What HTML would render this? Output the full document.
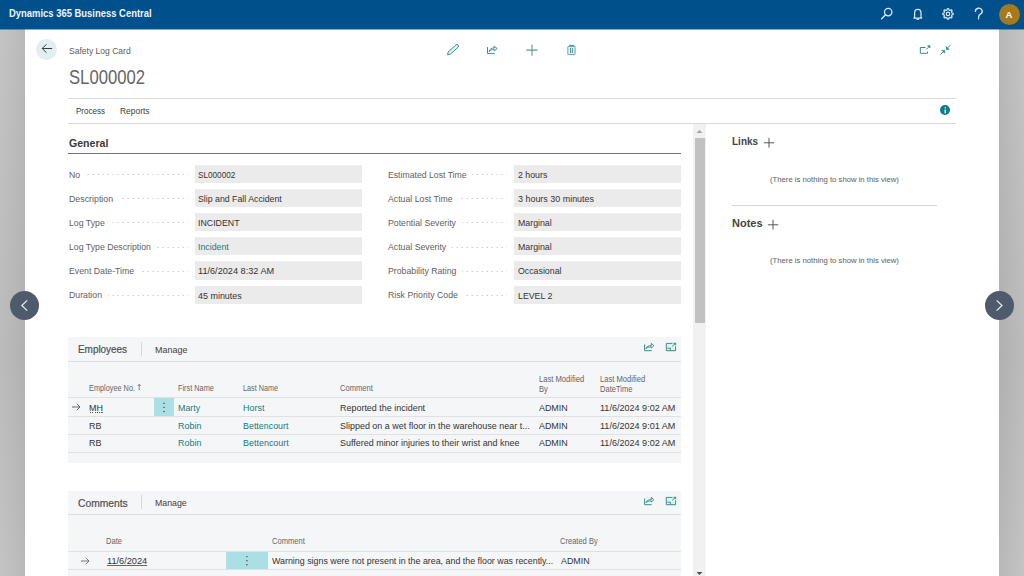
<!DOCTYPE html>
<html><head><meta charset="utf-8"><title>Safety Log Card</title><style>
html,body{margin:0;padding:0;width:1024px;height:576px;overflow:hidden;background:#fff;}
body{position:relative;font-family:"Liberation Sans", sans-serif;}
.t{position:absolute;white-space:nowrap;font-family:"Liberation Sans", sans-serif;}
.r{position:absolute;display:block;}
.dots{position:absolute;height:1px;background-image:linear-gradient(90deg,transparent 4px,#b4b4b4 4px);background-size:5px 1px;background-position:right top;z-index:1;}
</style></head><body>
<div class="r" style="left:0px;top:0px;width:1024px;height:576px;background:#ffffff;"></div>
<div class="r" style="left:0px;top:29px;width:25px;height:547px;background:linear-gradient(180deg,rgba(0,0,0,0) 0%,rgba(0,0,0,0.045) 60%,rgba(0,0,0,0) 100%),linear-gradient(90deg,#c4c4c4,#b9b9b9);"></div>
<div class="r" style="left:999px;top:29px;width:25px;height:547px;background:linear-gradient(180deg,rgba(0,0,0,0) 0%,rgba(0,0,0,0.045) 60%,rgba(0,0,0,0) 100%),linear-gradient(90deg,#b8b8b8,#c4c4c4);"></div>
<div class="r" style="left:0px;top:0px;width:1024px;height:29px;background:#00508c;"></div>
<div class="r" style="left:0px;top:29px;width:1024px;height:1px;background:rgba(0,70,125,0.45);"></div>
<div class="t" style="left:9.00px;top:8.54px;font-size:10px;line-height:10px;color:#eef5fc;font-weight:bold;transform:scaleX(0.9432);transform-origin:0 0;">Dynamics 365 Business Central</div>
<svg class="r" style="left:878px;top:6px;" width="18" height="16" viewBox="0 0 18 16"><circle cx="10.2" cy="6.1" r="3.7" fill="none" stroke="#d6e8fa" stroke-width="1.3"/><line x1="7.5" y1="8.8" x2="3.6" y2="12.7" stroke="#d6e8fa" stroke-width="1.4" stroke-linecap="round"/></svg>
<svg class="r" style="left:910px;top:6px;" width="16" height="16" viewBox="0 0 16 16"><path d="M4.6 11.4 V7.0 A3.2 3.6 0 0 1 11.0 7.0 V11.4 L11.7 12.0 H3.9 Z" fill="none" stroke="#d6e8fa" stroke-width="1.25" stroke-linejoin="round"/><path d="M6.6 12.7 A1.3 1.1 0 0 0 9.0 12.7" fill="none" stroke="#d6e8fa" stroke-width="1.2"/></svg>
<svg class="r" style="left:940px;top:6px;" width="16" height="16" viewBox="0 0 16 16"><polygon points="13.20,7.90 13.16,8.58 11.86,8.94 11.70,9.43 11.46,9.90 12.13,11.07 11.68,11.58 11.17,12.03 10.00,11.36 9.53,11.60 9.04,11.76 8.68,13.06 8.00,13.10 7.32,13.06 6.96,11.76 6.47,11.60 6.00,11.36 4.83,12.03 4.32,11.58 3.87,11.07 4.54,9.90 4.30,9.43 4.14,8.94 2.84,8.58 2.80,7.90 2.84,7.22 4.14,6.86 4.30,6.37 4.54,5.90 3.87,4.73 4.32,4.22 4.83,3.77 6.00,4.44 6.47,4.20 6.96,4.04 7.32,2.74 8.00,2.70 8.68,2.74 9.04,4.04 9.53,4.20 10.00,4.44 11.17,3.77 11.68,4.22 12.13,4.73 11.46,5.90 11.70,6.37 11.86,6.86 13.16,7.22" fill="none" stroke="#d6e8fa" stroke-width="1.2" stroke-linejoin="round"/><circle cx="8" cy="7.9" r="1.7" fill="none" stroke="#d6e8fa" stroke-width="1.2"/></svg>
<svg class="r" style="left:972px;top:6px;" width="14" height="16" viewBox="0 0 14 16"><path d="M3.4 5.4 A3.4 3.2 0 1 1 8.4 8.2 C7.0 9.0 6.6 9.8 6.6 11.2" fill="none" stroke="#d6e8fa" stroke-width="1.35" stroke-linecap="round"/><circle cx="6.6" cy="12.7" r="0.8" fill="#d6e8fa"/></svg>
<div class="r" style="left:999px;top:4px;width:21px;height:21px;border-radius:50%;background:#a8791b"></div>
<div class="t" style="left:1005.40px;top:10.26px;font-size:9.5px;line-height:9.5px;color:#ffffff;font-weight:bold;">A</div>
<div class="r" style="left:36px;top:38.5px;width:21px;height:21px;border-radius:50%;background:#e2eef0"></div>
<svg class="r" style="left:38px;top:41px;" width="17" height="16" viewBox="0 0 17 16"><path d="M4.2 7.5 H14.2 M8.4 3.3 L4.2 7.5 L8.4 11.7" fill="none" stroke="#333" stroke-width="0.95"/></svg>
<div class="t" style="left:68.60px;top:46.58px;font-size:9px;line-height:9px;color:#5e5e5e;font-weight:normal;transform:scaleX(0.9486);transform-origin:0 0;">Safety Log Card</div>
<div class="t" style="left:68.90px;top:66.66px;font-size:20.6px;line-height:20.6px;color:#666666;font-weight:normal;transform:scaleX(0.8091);transform-origin:0 0;">SL000002</div>
<svg class="r" style="left:444px;top:42px;" width="16" height="16" viewBox="0 0 16 16"><path d="M3.6 12.8 L4.1 10.0 L11.9 3.0 A1.5 1.5 0 0 1 14.1 5.2 L6.4 12.2 Z" fill="#e0f5f3" stroke="#3a8f8c" stroke-width="1.0" stroke-linejoin="round"/></svg>
<svg class="r" style="left:484px;top:42px;" width="16" height="16" viewBox="0 0 16 16"><path d="M3.5 5.2 V11.4 H10.6" fill="none" stroke="#3a8f8c" stroke-width="1.0"/><path d="M5.3 9.6 C5.5 7.1 7.3 5.9 10.2 5.9 V4.1 L13.2 6.6 L10.2 9.0 V7.4 C8.2 7.4 6.6 8.0 5.3 9.6 Z" fill="#e0f5f3" stroke="#3a8f8c" stroke-width="0.95" stroke-linejoin="round"/></svg>
<svg class="r" style="left:524px;top:42px;" width="16" height="16" viewBox="0 0 16 16"><path d="M2.3 8.1 H13.5 M8 2.5 V13.8" fill="none" stroke="#5a9a92" stroke-width="1.1"/></svg>
<svg class="r" style="left:564px;top:42px;" width="16" height="16" viewBox="0 0 16 16"><path d="M5.2 3.4 H10.2" stroke="#3a8f8c" stroke-width="1.0"/><rect x="3.8" y="4.5" width="7.3" height="8.1" rx="0.4" fill="#dff2f0" stroke="#5aa29e" stroke-width="0.9"/><path d="M6.5 6 V11 M8.4 6 V11" stroke="#3a8f8c" stroke-width="0.9"/></svg>
<svg class="r" style="left:916px;top:42px;" width="16" height="16" viewBox="0 0 16 16"><path d="M11.5 9.5 V11.3 H4.3 V5.5 H9.5" fill="none" stroke="#3a8f8c" stroke-width="1.0"/><path d="M10.2 7.5 L13.6 4.1" fill="none" stroke="#3a8f8c" stroke-width="1.0"/><path d="M11.6 3.6 H14 V6 Z" fill="#3a8f8c" stroke="#3a8f8c" stroke-width="0.6"/></svg>
<svg class="r" style="left:938px;top:42px;" width="16" height="16" viewBox="0 0 16 16"><path d="M2.3 12.7 L6.3 8.7" fill="none" stroke="#3a8f8c" stroke-width="1.0"/><path d="M3.8 8.3 H6.8 V11.3 Z" fill="#3a8f8c" stroke="#3a8f8c" stroke-width="0.6"/><path d="M12.6 2.9 L8.6 6.9" fill="none" stroke="#3a8f8c" stroke-width="1.0"/><path d="M8.2 4.4 V7.4 H11.2 Z" fill="#3a8f8c" stroke="#3a8f8c" stroke-width="0.6"/></svg>
<div class="r" style="left:68px;top:98px;width:888px;height:1px;background:#d9d9d9;"></div>
<div class="t" style="left:75.80px;top:106.78px;font-size:9px;line-height:9px;color:#3b3b3b;font-weight:normal;transform:scaleX(0.8952);transform-origin:0 0;">Process</div>
<div class="t" style="left:120.20px;top:106.78px;font-size:9px;line-height:9px;color:#3b3b3b;font-weight:normal;transform:scaleX(0.9362);transform-origin:0 0;">Reports</div>
<div class="r" style="left:68px;top:123px;width:888px;height:1px;background:#d9d9d9;"></div>
<div class="r" style="left:940px;top:104.6px;width:10.4px;height:10.4px;border-radius:50%;background:#0b7e87"></div>
<svg class="r" style="left:940px;top:104.6px;" width="10.4" height="10.4" viewBox="0 0 10.4 10.4"><rect x="4.55" y="4.5" width="1.3" height="3.7" fill="#fff"/><circle cx="5.2" cy="2.75" r="0.7" fill="#fff"/></svg>
<div class="t" style="left:68.50px;top:137.69px;font-size:11px;line-height:11px;color:#3a3a3a;font-weight:bold;transform:scaleX(0.9618);transform-origin:0 0;">General</div>
<div class="r" style="left:68px;top:152.5px;width:613px;height:1.3px;background:#747474;"></div>
<div class="dots" style="left:68.6px;top:174.10px;width:119.6px"></div>
<div class="t" style="left:68.60px;top:170.61px;font-size:9.2px;line-height:9.2px;color:#616161;font-weight:normal;transform:scaleX(0.9500);transform-origin:0 0;background:#fff;padding-right:6px;z-index:2;">No</div>
<div class="r" style="left:195px;top:164.7px;width:166.5px;height:18.2px;background:#ebebeb;"></div>
<div class="t" style="left:198.40px;top:169.76px;font-size:9.5px;line-height:9.5px;color:#333333;font-weight:normal;transform:scaleX(0.8610);transform-origin:0 0;">SL000002</div>
<div class="dots" style="left:387.8px;top:174.10px;width:119.7px"></div>
<div class="t" style="left:387.80px;top:170.61px;font-size:9.2px;line-height:9.2px;color:#616161;font-weight:normal;transform:scaleX(0.9443);transform-origin:0 0;background:#fff;padding-right:6px;z-index:2;">Estimated Lost Time</div>
<div class="r" style="left:514.4px;top:164.7px;width:166.2px;height:18.2px;background:#ebebeb;"></div>
<div class="t" style="left:517.60px;top:169.76px;font-size:9.5px;line-height:9.5px;color:#333333;font-weight:normal;transform:scaleX(0.9250);transform-origin:0 0;">2 hours</div>
<div class="dots" style="left:68.6px;top:198.26px;width:119.6px"></div>
<div class="t" style="left:68.60px;top:194.77px;font-size:9.2px;line-height:9.2px;color:#616161;font-weight:normal;transform:scaleX(0.9605);transform-origin:0 0;background:#fff;padding-right:6px;z-index:2;">Description</div>
<div class="r" style="left:195px;top:188.86px;width:166.5px;height:18.2px;background:#ebebeb;"></div>
<div class="t" style="left:198.40px;top:193.92px;font-size:9.5px;line-height:9.5px;color:#333333;font-weight:normal;transform:scaleX(0.9226);transform-origin:0 0;">Slip and Fall Accident</div>
<div class="dots" style="left:387.8px;top:198.26px;width:119.7px"></div>
<div class="t" style="left:387.80px;top:194.77px;font-size:9.2px;line-height:9.2px;color:#616161;font-weight:normal;transform:scaleX(0.9500);transform-origin:0 0;background:#fff;padding-right:6px;z-index:2;">Actual Lost Time</div>
<div class="r" style="left:514.4px;top:188.86px;width:166.2px;height:18.2px;background:#ebebeb;"></div>
<div class="t" style="left:517.60px;top:193.92px;font-size:9.5px;line-height:9.5px;color:#333333;font-weight:normal;transform:scaleX(0.9406);transform-origin:0 0;">3 hours 30 minutes</div>
<div class="dots" style="left:68.6px;top:222.42px;width:119.6px"></div>
<div class="t" style="left:68.60px;top:218.93px;font-size:9.2px;line-height:9.2px;color:#616161;font-weight:normal;transform:scaleX(0.9500);transform-origin:0 0;background:#fff;padding-right:6px;z-index:2;">Log Type</div>
<div class="r" style="left:195px;top:213.02px;width:166.5px;height:18.2px;background:#ebebeb;"></div>
<div class="t" style="left:198.40px;top:218.08px;font-size:9.5px;line-height:9.5px;color:#333333;font-weight:normal;transform:scaleX(0.9250);transform-origin:0 0;">INCIDENT</div>
<div class="dots" style="left:387.8px;top:222.42px;width:119.7px"></div>
<div class="t" style="left:387.80px;top:218.93px;font-size:9.2px;line-height:9.2px;color:#616161;font-weight:normal;transform:scaleX(0.9500);transform-origin:0 0;background:#fff;padding-right:6px;z-index:2;">Potential Severity</div>
<div class="r" style="left:514.4px;top:213.02px;width:166.2px;height:18.2px;background:#ebebeb;"></div>
<div class="t" style="left:517.60px;top:218.08px;font-size:9.5px;line-height:9.5px;color:#333333;font-weight:normal;transform:scaleX(0.9250);transform-origin:0 0;">Marginal</div>
<div class="dots" style="left:68.6px;top:246.58px;width:119.6px"></div>
<div class="t" style="left:68.60px;top:243.09px;font-size:9.2px;line-height:9.2px;color:#616161;font-weight:normal;transform:scaleX(0.9500);transform-origin:0 0;background:#fff;padding-right:6px;z-index:2;">Log Type Description</div>
<div class="r" style="left:195px;top:237.18px;width:166.5px;height:18.2px;background:#ebebeb;"></div>
<div class="t" style="left:198.40px;top:242.24px;font-size:9.5px;line-height:9.5px;color:#177a7e;font-weight:normal;transform:scaleX(0.9250);transform-origin:0 0;">Incident</div>
<div class="dots" style="left:387.8px;top:246.58px;width:119.7px"></div>
<div class="t" style="left:387.80px;top:243.09px;font-size:9.2px;line-height:9.2px;color:#616161;font-weight:normal;transform:scaleX(0.9500);transform-origin:0 0;background:#fff;padding-right:6px;z-index:2;">Actual Severity</div>
<div class="r" style="left:514.4px;top:237.18px;width:166.2px;height:18.2px;background:#ebebeb;"></div>
<div class="t" style="left:517.60px;top:242.24px;font-size:9.5px;line-height:9.5px;color:#333333;font-weight:normal;transform:scaleX(0.9250);transform-origin:0 0;">Marginal</div>
<div class="dots" style="left:68.6px;top:270.74px;width:119.6px"></div>
<div class="t" style="left:68.60px;top:267.25px;font-size:9.2px;line-height:9.2px;color:#616161;font-weight:normal;transform:scaleX(0.9500);transform-origin:0 0;background:#fff;padding-right:6px;z-index:2;">Event Date-Time</div>
<div class="r" style="left:195px;top:261.34px;width:166.5px;height:18.2px;background:#ebebeb;"></div>
<div class="t" style="left:198.40px;top:266.40px;font-size:9.5px;line-height:9.5px;color:#333333;font-weight:normal;transform:scaleX(0.9627);transform-origin:0 0;">11/6/2024 8:32 AM</div>
<div class="dots" style="left:387.8px;top:270.74px;width:119.7px"></div>
<div class="t" style="left:387.80px;top:267.25px;font-size:9.2px;line-height:9.2px;color:#616161;font-weight:normal;transform:scaleX(0.9500);transform-origin:0 0;background:#fff;padding-right:6px;z-index:2;">Probability Rating</div>
<div class="r" style="left:514.4px;top:261.34px;width:166.2px;height:18.2px;background:#ebebeb;"></div>
<div class="t" style="left:517.60px;top:266.40px;font-size:9.5px;line-height:9.5px;color:#333333;font-weight:normal;transform:scaleX(0.9250);transform-origin:0 0;">Occasional</div>
<div class="dots" style="left:68.6px;top:294.90px;width:119.6px"></div>
<div class="t" style="left:68.60px;top:291.41px;font-size:9.2px;line-height:9.2px;color:#616161;font-weight:normal;transform:scaleX(0.9500);transform-origin:0 0;background:#fff;padding-right:6px;z-index:2;">Duration</div>
<div class="r" style="left:195px;top:285.5px;width:166.5px;height:18.2px;background:#ebebeb;"></div>
<div class="t" style="left:198.40px;top:290.56px;font-size:9.5px;line-height:9.5px;color:#333333;font-weight:normal;transform:scaleX(0.9425);transform-origin:0 0;">45 minutes</div>
<div class="dots" style="left:387.8px;top:294.90px;width:119.7px"></div>
<div class="t" style="left:387.80px;top:291.41px;font-size:9.2px;line-height:9.2px;color:#616161;font-weight:normal;transform:scaleX(0.9500);transform-origin:0 0;background:#fff;padding-right:6px;z-index:2;">Risk Priority Code</div>
<div class="r" style="left:514.4px;top:285.5px;width:166.2px;height:18.2px;background:#ebebeb;"></div>
<div class="t" style="left:517.60px;top:290.56px;font-size:9.5px;line-height:9.5px;color:#333333;font-weight:normal;transform:scaleX(0.9250);transform-origin:0 0;">LEVEL 2</div>
<div class="r" style="left:693px;top:124px;width:13px;height:452px;background:#f1f1f1;"></div>
<div class="r" style="left:694.7px;top:138px;width:10px;height:185px;background:#c1c1c1;"></div>
<svg class="r" style="left:693px;top:126px;" width="13" height="10" viewBox="0 0 13 10"><path d="M3.5 7 L6.5 4 L9.5 7 Z" fill="#a3a3a3"/></svg>
<svg class="r" style="left:693px;top:570px;" width="13" height="6" viewBox="0 0 13 6"><path d="M3.5 2 L6.5 5 L9.5 2 Z" fill="#505050"/></svg>
<div class="r" style="left:68px;top:337px;width:612.5px;height:126px;background:#f5f6f8;"></div>
<div class="t" style="left:78.40px;top:344.23px;font-size:10.6px;line-height:10.6px;color:#4a4f55;font-weight:normal;transform:scaleX(0.9363);transform-origin:0 0;-webkit-text-stroke:0.2px #4a4f55;">Employees</div>
<div class="r" style="left:141px;top:341.5px;width:1px;height:14px;background:#d6d8da;"></div>
<div class="t" style="left:154.60px;top:344.79px;font-size:9.7px;line-height:9.7px;color:#404040;font-weight:normal;transform:scaleX(0.9242);transform-origin:0 0;">Manage</div>
<svg class="r" style="left:641px;top:340px;" width="16" height="13" viewBox="0 0 16 13"><path d="M3.6 4.5 V10.7 H10.7" fill="none" stroke="#3a8f8c" stroke-width="1.0"/><path d="M4.9 8.8 C5.4 6.6 7.4 5.6 10.3 5.6 V3.3 L12.9 5.7 L10.3 8.0 V6.9 C8.0 6.9 6.3 7.4 4.9 8.8 Z" fill="#dcf3f0" stroke="#3a8f8c" stroke-width="0.95" stroke-linejoin="round"/></svg>
<svg class="r" style="left:663px;top:340px;" width="16" height="13" viewBox="0 0 16 13"><path d="M9.5 3.4 H3.3 V10.7 H12.6 V6.2" fill="#dcf3f0" stroke="#3a8f8c" stroke-width="1.0"/><path d="M4.3 8.2 H7.4 V10.7" fill="none" stroke="#3a8f8c" stroke-width="0.95"/><path d="M9.2 6.4 L12.2 3.5" fill="none" stroke="#3a8f8c" stroke-width="1.0"/><path d="M10.5 3.0 H12.8 V5.3 Z" fill="#3a8f8c" stroke="#3a8f8c" stroke-width="0.5"/></svg>
<div class="r" style="left:68px;top:361px;width:612.5px;height:1px;background:#dcdee2;"></div>
<div class="t" style="left:89.20px;top:384.66px;font-size:8.2px;line-height:8.2px;color:#656565;font-weight:normal;transform:scaleX(0.8951);transform-origin:0 0;">Employee No.</div>
<svg class="r" style="left:136px;top:382px;" width="6" height="10" viewBox="0 0 6 10"><path d="M3.2 8.2 V2.4 M1.6 4.0 L3.2 2.4 L4.8 4.0" fill="none" stroke="#555" stroke-width="0.7"/></svg>
<div class="t" style="left:178.00px;top:384.66px;font-size:8.2px;line-height:8.2px;color:#656565;font-weight:normal;transform:scaleX(0.8955);transform-origin:0 0;">First Name</div>
<div class="t" style="left:243.10px;top:384.66px;font-size:8.2px;line-height:8.2px;color:#656565;font-weight:normal;transform:scaleX(0.8828);transform-origin:0 0;">Last Name</div>
<div class="t" style="left:340.00px;top:384.66px;font-size:8.2px;line-height:8.2px;color:#656565;font-weight:normal;transform:scaleX(0.9227);transform-origin:0 0;">Comment</div>
<div class="t" style="left:538.80px;top:376.36px;font-size:8.2px;line-height:8.2px;color:#656565;font-weight:normal;transform:scaleX(0.9288);transform-origin:0 0;">Last Modified</div>
<div class="t" style="left:538.80px;top:385.96px;font-size:8.2px;line-height:8.2px;color:#656565;font-weight:normal;transform:scaleX(0.9200);transform-origin:0 0;">By</div>
<div class="t" style="left:600.00px;top:376.36px;font-size:8.2px;line-height:8.2px;color:#656565;font-weight:normal;transform:scaleX(0.9288);transform-origin:0 0;">Last Modified</div>
<div class="t" style="left:600.00px;top:385.96px;font-size:8.2px;line-height:8.2px;color:#656565;font-weight:normal;transform:scaleX(0.9200);transform-origin:0 0;">DateTime</div>
<div class="r" style="left:68px;top:397px;width:612.5px;height:1px;background:#dfe1e4;"></div>
<div class="r" style="left:68px;top:416px;width:612.5px;height:1px;background:#dfe1e4;"></div>
<div class="r" style="left:68px;top:434px;width:612.5px;height:1px;background:#dfe1e4;"></div>
<div class="r" style="left:68px;top:452px;width:612.5px;height:1px;background:#dfe1e4;"></div>
<div class="r" style="left:154.4px;top:398px;width:19.8px;height:18px;background:#aadfe4;"></div>
<svg class="r" style="left:154.4px;top:398px;" width="20" height="18" viewBox="0 0 20 18"><circle cx="10" cy="5.3" r="0.7" fill="#3a3a3a"/><circle cx="10" cy="9.4" r="0.7" fill="#3a3a3a"/><circle cx="10" cy="13.5" r="0.7" fill="#3a3a3a"/></svg>
<svg class="r" style="left:69px;top:399px;" width="14" height="16" viewBox="0 0 14 16"><path d="M3 8 H11 M7.8 4.8 L11 8 L7.8 11.2" fill="none" stroke="#505050" stroke-width="0.85"/></svg>
<div class="t" style="left:89.40px;top:402.64px;font-size:9.4px;line-height:9.4px;color:#333333;font-weight:normal;transform:scaleX(0.9550);transform-origin:0 0;">MH</div>
<div class="r" style="left:89.5px;top:411.6px;width:13.8px;height:1px;background:repeating-linear-gradient(90deg,#555 0 1.2px,transparent 1.2px 2.3px);"></div>
<div class="t" style="left:178.40px;top:402.64px;font-size:9.4px;line-height:9.4px;color:#177a7e;font-weight:normal;transform:scaleX(0.9489);transform-origin:0 0;">Marty</div>
<div class="t" style="left:243.40px;top:402.64px;font-size:9.4px;line-height:9.4px;color:#177a7e;font-weight:normal;transform:scaleX(0.9550);transform-origin:0 0;">Horst</div>
<div class="t" style="left:340.20px;top:402.64px;font-size:9.4px;line-height:9.4px;color:#333333;font-weight:normal;transform:scaleX(0.9550);transform-origin:0 0;">Reported the incident</div>
<div class="t" style="left:538.80px;top:402.64px;font-size:9.4px;line-height:9.4px;color:#333333;font-weight:normal;transform:scaleX(0.9476);transform-origin:0 0;">ADMIN</div>
<div class="t" style="left:600.00px;top:402.64px;font-size:9.4px;line-height:9.4px;color:#333333;font-weight:normal;transform:scaleX(0.9653);transform-origin:0 0;">11/6/2024 9:02 AM</div>
<div class="t" style="left:89.40px;top:420.54px;font-size:9.4px;line-height:9.4px;color:#333333;font-weight:normal;transform:scaleX(0.9550);transform-origin:0 0;">RB</div>
<div class="t" style="left:178.40px;top:420.54px;font-size:9.4px;line-height:9.4px;color:#177a7e;font-weight:normal;transform:scaleX(0.9550);transform-origin:0 0;">Robin</div>
<div class="t" style="left:243.40px;top:420.54px;font-size:9.4px;line-height:9.4px;color:#177a7e;font-weight:normal;transform:scaleX(0.9486);transform-origin:0 0;">Bettencourt</div>
<div class="t" style="left:340.20px;top:420.54px;font-size:9.4px;line-height:9.4px;color:#333333;font-weight:normal;transform:scaleX(0.9550);transform-origin:0 0;">Slipped on a wet floor in the warehouse near t...</div>
<div class="t" style="left:538.80px;top:420.54px;font-size:9.4px;line-height:9.4px;color:#333333;font-weight:normal;transform:scaleX(0.9476);transform-origin:0 0;">ADMIN</div>
<div class="t" style="left:600.00px;top:420.54px;font-size:9.4px;line-height:9.4px;color:#333333;font-weight:normal;transform:scaleX(0.9653);transform-origin:0 0;">11/6/2024 9:01 AM</div>
<div class="t" style="left:89.40px;top:438.44px;font-size:9.4px;line-height:9.4px;color:#333333;font-weight:normal;transform:scaleX(0.9550);transform-origin:0 0;">RB</div>
<div class="t" style="left:178.40px;top:438.44px;font-size:9.4px;line-height:9.4px;color:#177a7e;font-weight:normal;transform:scaleX(0.9550);transform-origin:0 0;">Robin</div>
<div class="t" style="left:243.40px;top:438.44px;font-size:9.4px;line-height:9.4px;color:#177a7e;font-weight:normal;transform:scaleX(0.9550);transform-origin:0 0;">Bettencourt</div>
<div class="t" style="left:340.20px;top:438.44px;font-size:9.4px;line-height:9.4px;color:#333333;font-weight:normal;transform:scaleX(0.9550);transform-origin:0 0;">Suffered minor injuries to their wrist and knee</div>
<div class="t" style="left:538.80px;top:438.44px;font-size:9.4px;line-height:9.4px;color:#333333;font-weight:normal;transform:scaleX(0.9476);transform-origin:0 0;">ADMIN</div>
<div class="t" style="left:600.00px;top:438.44px;font-size:9.4px;line-height:9.4px;color:#333333;font-weight:normal;transform:scaleX(0.9653);transform-origin:0 0;">11/6/2024 9:02 AM</div>
<div class="r" style="left:68px;top:490.5px;width:612.5px;height:86px;background:#f5f6f8;"></div>
<div class="t" style="left:78.40px;top:497.73px;font-size:10.6px;line-height:10.6px;color:#4a4f55;font-weight:normal;transform:scaleX(0.9697);transform-origin:0 0;-webkit-text-stroke:0.2px #4a4f55;">Comments</div>
<div class="r" style="left:141px;top:495.0px;width:1px;height:14px;background:#d6d8da;"></div>
<div class="t" style="left:154.60px;top:498.29px;font-size:9.7px;line-height:9.7px;color:#404040;font-weight:normal;transform:scaleX(0.9043);transform-origin:0 0;">Manage</div>
<svg class="r" style="left:641px;top:493.5px;" width="16" height="13" viewBox="0 0 16 13"><path d="M3.6 4.5 V10.7 H10.7" fill="none" stroke="#3a8f8c" stroke-width="1.0"/><path d="M4.9 8.8 C5.4 6.6 7.4 5.6 10.3 5.6 V3.3 L12.9 5.7 L10.3 8.0 V6.9 C8.0 6.9 6.3 7.4 4.9 8.8 Z" fill="#dcf3f0" stroke="#3a8f8c" stroke-width="0.95" stroke-linejoin="round"/></svg>
<svg class="r" style="left:663px;top:493.5px;" width="16" height="13" viewBox="0 0 16 13"><path d="M9.5 3.4 H3.3 V10.7 H12.6 V6.2" fill="#dcf3f0" stroke="#3a8f8c" stroke-width="1.0"/><path d="M4.3 8.2 H7.4 V10.7" fill="none" stroke="#3a8f8c" stroke-width="0.95"/><path d="M9.2 6.4 L12.2 3.5" fill="none" stroke="#3a8f8c" stroke-width="1.0"/><path d="M10.5 3.0 H12.8 V5.3 Z" fill="#3a8f8c" stroke="#3a8f8c" stroke-width="0.5"/></svg>
<div class="r" style="left:68px;top:514px;width:612.5px;height:1px;background:#dcdee2;"></div>
<div class="t" style="left:106.20px;top:537.66px;font-size:8.2px;line-height:8.2px;color:#656565;font-weight:normal;transform:scaleX(0.9200);transform-origin:0 0;">Date</div>
<div class="t" style="left:271.70px;top:537.66px;font-size:8.2px;line-height:8.2px;color:#656565;font-weight:normal;transform:scaleX(0.9227);transform-origin:0 0;">Comment</div>
<div class="t" style="left:560.40px;top:537.66px;font-size:8.2px;line-height:8.2px;color:#656565;font-weight:normal;transform:scaleX(0.9200);transform-origin:0 0;">Created By</div>
<div class="r" style="left:68px;top:551px;width:612.5px;height:1px;background:#dfe1e4;"></div>
<div class="r" style="left:68px;top:569px;width:612.5px;height:1px;background:#dfe1e4;"></div>
<div class="r" style="left:226.4px;top:552px;width:41.5px;height:17px;background:#aadfe4;"></div>
<svg class="r" style="left:226.4px;top:552px;" width="42" height="18" viewBox="0 0 42 18"><circle cx="20.9" cy="4.6" r="0.7" fill="#3a3a3a"/><circle cx="20.9" cy="8.7" r="0.7" fill="#3a3a3a"/><circle cx="20.9" cy="12.8" r="0.7" fill="#3a3a3a"/></svg>
<svg class="r" style="left:78px;top:553px;" width="14" height="16" viewBox="0 0 14 16"><path d="M3 8 H11 M7.8 4.8 L11 8 L7.8 11.2" fill="none" stroke="#606060" stroke-width="0.85"/></svg>
<div class="t" style="left:106.90px;top:556.04px;font-size:9.4px;line-height:9.4px;color:#333333;font-weight:normal;transform:scaleX(0.9799);transform-origin:0 0;text-decoration:underline #666;text-decoration-thickness:1px;text-underline-offset:0.6px;">11/6/2024</div>
<div class="t" style="left:272.20px;top:556.04px;font-size:9.4px;line-height:9.4px;color:#333333;font-weight:normal;transform:scaleX(0.9452);transform-origin:0 0;">Warning signs were not present in the area, and the floor was recently...</div>
<div class="t" style="left:560.80px;top:556.04px;font-size:9.4px;line-height:9.4px;color:#333333;font-weight:normal;transform:scaleX(0.9476);transform-origin:0 0;">ADMIN</div>
<div class="t" style="left:731.70px;top:136.47px;font-size:11.5px;line-height:11.5px;color:#444444;font-weight:bold;transform:scaleX(0.8689);transform-origin:0 0;">Links</div>
<svg class="r" style="left:762px;top:136px;" width="14" height="14" viewBox="0 0 14 14"><path d="M1.8 6.8 H12.2 M7 1.8 V11.6" fill="none" stroke="#505050" stroke-width="0.95"/></svg>
<div class="t" style="left:770.00px;top:176.03px;font-size:8px;line-height:8px;color:#606060;font-weight:normal;transform:scaleX(0.9631);transform-origin:0 0;">(There is nothing to show in this view)</div>
<div class="r" style="left:731.7px;top:205px;width:205.7px;height:1px;background:#d6d6d6;"></div>
<div class="t" style="left:731.70px;top:218.21px;font-size:11.8px;line-height:11.8px;color:#444444;font-weight:bold;transform:scaleX(0.9304);transform-origin:0 0;">Notes</div>
<svg class="r" style="left:766px;top:218px;" width="14" height="14" viewBox="0 0 14 14"><path d="M1.8 6.8 H12.2 M7 1.8 V11.6" fill="none" stroke="#505050" stroke-width="0.95"/></svg>
<div class="t" style="left:770.00px;top:257.23px;font-size:8px;line-height:8px;color:#606060;font-weight:normal;transform:scaleX(0.9631);transform-origin:0 0;">(There is nothing to show in this view)</div>
<div class="r" style="left:10.2px;top:291.2px;width:29px;height:29px;border-radius:50%;background:#4f5b6c"></div>
<svg class="r" style="left:10.2px;top:291.2px;" width="29" height="29" viewBox="0 0 29 29"><path d="M17.2 9.4 L11.8 14.5 L17.2 19.6" fill="none" stroke="#e8ecf2" stroke-width="1.2"/></svg>
<div class="r" style="left:985px;top:291.2px;width:29px;height:29px;border-radius:50%;background:#4f5b6c"></div>
<svg class="r" style="left:985px;top:291.2px;" width="29" height="29" viewBox="0 0 29 29"><path d="M11.6 9.4 L17.0 14.5 L11.6 19.6" fill="none" stroke="#e8ecf2" stroke-width="1.2"/></svg>
</body></html>
